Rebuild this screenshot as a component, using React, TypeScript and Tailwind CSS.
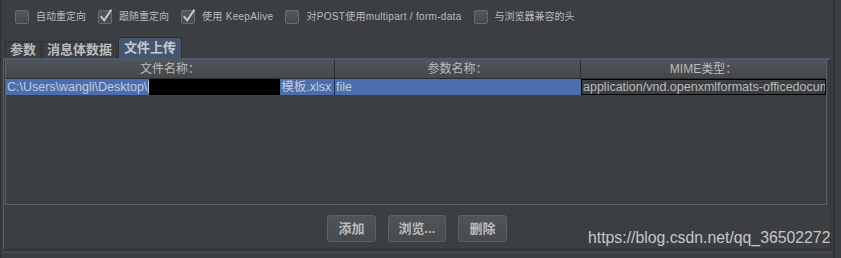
import React from 'react';

const font = 'font-["Liberation_Sans","Noto_Sans_CJK_SC",sans-serif]';

interface Opt {
  label: string;
  checked: boolean;
  wide?: boolean;
}

const options: Opt[] = [
  { label: '自动重定向', checked: false },
  { label: '跟随重定向', checked: true },
  { label: '使用 KeepAlive', checked: true, wide: true },
  { label: '对POST使用multipart / form-data', checked: false, wide: true },
  { label: '与浏览器兼容的头', checked: false },
];

function CheckBox({ checked }: { checked: boolean }) {
  return (
    <span className="relative w-[14px] h-[14px] rounded-[2px] border border-[#6b6b6b] bg-gradient-to-b from-[#53585a] to-[#45494b] shrink-0">
      {checked && (
        <svg viewBox="0 0 14 14" className="absolute -left-[1px] -top-[3px] w-[15px] h-[15px]">
          <path d="M2.5 7.5 L5.8 11.5 L12.5 1.5" fill="none" stroke="#c8c8c8" strokeWidth="1.8" />
        </svg>
      )}
    </span>
  );
}

const tabs = ['参数', '消息体数据', '文件上传'];

export default function App() {
  return (
    <div className={`${font} relative w-[841px] h-[258px] bg-[#3c3f41] overflow-hidden text-[#bbbbbb]`}>
      <div className="flex h-full">
        <div className="w-[834px] h-full border-l-[1px] border-l-[#2f3133] border-r border-r-[#2f3133] pl-[2px] flex flex-col">
          {/* options */}
          <div className="flex items-center h-[37px] pb-[3px] pl-[12px]">
            {options.map((o) => (
              <div key={o.label} className="flex items-center gap-[7px] mr-[12px]">
                <CheckBox checked={o.checked} />
                <span className={`text-[10px] leading-none ${o.wide ? 'tracking-[0.3px]' : ''}`}>{o.label}</span>
              </div>
            ))}
          </div>

          {/* tabs */}
          <div className="flex items-end h-[21px] pl-[2px]">
            {tabs.map((t, i) => {
              const active = i === tabs.length - 1;
              return (
                <div
                  key={t}
                  className={
                    active
                      ? 'h-[21px] px-[5px] flex items-center bg-[#475670] border border-b-0 border-[#2f3133] rounded-t-[3px] text-[13px] font-bold text-[#c5c9d0]'
                      : 'h-[17px] px-[4px] mr-[1px] flex items-center bg-[#3c3f41] border border-b-0 border-[#2f3133] rounded-t-[2px] text-[13px] font-bold text-[#bbbbbb]'
                  }
                >
                  {t}
                </div>
              );
            })}
          </div>

          {/* panel */}
          <div className="w-[828px] h-[192px] border-t-2 border-t-[#4a5876] border-l border-l-[#5a5d5f] border-r border-r-[#2f3133] border-b border-b-[#2b2d2e] flex flex-col pl-[1px]">
            {/* table */}
            <div className="w-[822px] h-[145px] border-l border-r border-b border-[#5e6163] flex flex-col">
              <div className="flex h-[19px] bg-gradient-to-b from-[#515557] to-[#44484a] border-b border-[#2b2d2e] text-[12px] leading-none">
                <div className="w-[329px] flex items-center justify-center border-r border-[#2b2d2e]">文件名称：</div>
                <div className="w-[246px] flex items-center justify-center border-r border-[#2b2d2e]">参数名称：</div>
                <div className="flex-1 flex items-center justify-center">MIME类型：</div>
              </div>
              <div className="flex h-[16px] text-[12.5px] leading-none">
                <div className="w-[329px] bg-[#4b6eaf] flex items-center pl-[1px] border-r border-[#2b2d2e] whitespace-nowrap overflow-hidden">
                  <span className="text-[#c4cbd8]">C:\Users\wangli\Desktop\</span>
                  <span className="w-[1px] h-[12px] bg-[#c4cbd8] ml-[1px]" />
                  <span className="w-[131px] h-[17px] bg-black shrink-0" />
                  <span className="text-[#c4cbd8] ml-[1px]">模板.xlsx</span>
                </div>
                <div className="w-[246px] bg-[#4b6eaf] flex items-center pl-[1px] text-[#c4cbd8]">file</div>
                <div className="flex-1 bg-[#3c3f41] border border-black flex items-center pl-[1px] whitespace-nowrap overflow-hidden text-[#bbbbbb]">
                  application/vnd.openxmlformats-officedocum
                </div>
              </div>
            </div>

            {/* buttons */}
            <div className="flex justify-center gap-[12px] pt-[10px] pr-[1px]">
              {['添加', '浏览...', '删除'].map((b) => (
                <button
                  key={b}
                  className={`h-[27px] ${b === '浏览...' ? 'w-[58px]' : 'w-[49px]'} rounded-[3px] border border-[#5e6163] bg-gradient-to-b from-[#50555a] to-[#474b4e] text-[13px] font-bold text-[#bbbbbb] leading-none`}
                >
                  {b}
                </button>
              ))}
            </div>
          </div>
          <div className="mt-[2px] w-[828px] border-t border-[#4a4d50]" />
        </div>
        <div className="flex-1 border-l border-[#2f3133]" />
      </div>

      <div className="absolute left-[588px] top-[230px] text-[15.8px] leading-none text-[#c6c6c6]">
        https://blog.csdn.net/qq_36502272
      </div>
    </div>
  );
}
